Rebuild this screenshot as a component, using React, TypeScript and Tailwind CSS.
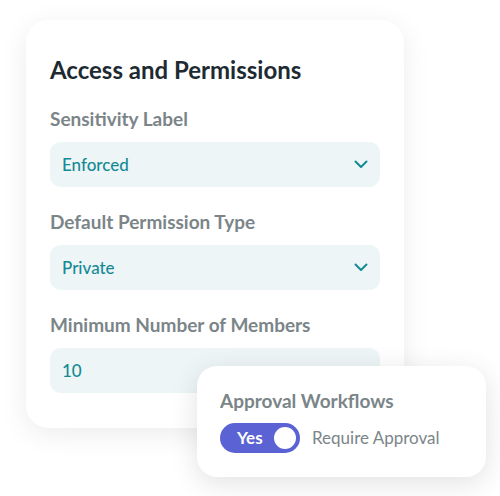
import React from "react";

function Chevron() {
  return (
    <svg width="14" height="9" viewBox="0 0 14 9" fill="none">
      <path d="M1.5 1.5L7 7L12.5 1.5" stroke="#168a94" strokeWidth="2" strokeLinecap="round" strokeLinejoin="round" />
    </svg>
  );
}

function Field({ label, value, select }: { label: string; value: string; select?: boolean }) {
  return (
    <div className="flex flex-col gap-[11px]">
      <div className="text-[19px] leading-[24px] font-bold text-[#7b8588]">{label}</div>
      <div className="h-[45px] rounded-[11px] bg-[#edf5f7] flex items-center justify-between pl-[12px] pr-[12px]">
        <span className="text-[17px] font-medium text-[#168a94]">{value}</span>
        {select ? <Chevron /> : null}
      </div>
    </div>
  );
}

export default function App() {
  return (
    <div
      className="relative w-[500px] h-[496px] bg-white overflow-hidden"
      style={{ fontFamily: "Lato, 'Noto Sans', sans-serif" }}
    >
      <div className="ml-[26px] mt-[20px] w-[378px] h-[408px] rounded-[22px] bg-white shadow-[0_6px_28px_rgba(0,0,0,0.08)] pt-[35px] pl-[24px] pr-[24px] flex flex-col">
        <h1 className="text-[24px] leading-[30px] font-bold text-[#1e2a32]">Access and Permissions</h1>
        <div className="mt-[22px] flex flex-col gap-[23px]">
          <Field label="Sensitivity Label" value="Enforced" select />
          <Field label="Default Permission Type" value="Private" select />
          <Field label="Minimum Number of Members" value="10" />
        </div>
      </div>

      <div className="absolute left-[197px] top-[366px] w-[289px] h-[111px] rounded-[20px] bg-white shadow-[0_6px_28px_rgba(0,0,0,0.12)] pt-[23px] pl-[23px] flex flex-col gap-[10px]">
        <div className="text-[19px] leading-[24px] font-bold text-[#7b8588]">Approval Workflows</div>
        <div className="flex items-center gap-[12px]">
          <div className="w-[80px] h-[30px] rounded-full bg-[#5a62d4] flex items-center justify-between pl-[17px] pr-[4px]">
            <span className="text-[17px] font-bold text-white">Yes</span>
            <span className="w-[22px] h-[22px] rounded-full bg-white" />
          </div>
          <span className="text-[17px] text-[#7b8588]">Require Approval</span>
        </div>
      </div>
    </div>
  );
}
